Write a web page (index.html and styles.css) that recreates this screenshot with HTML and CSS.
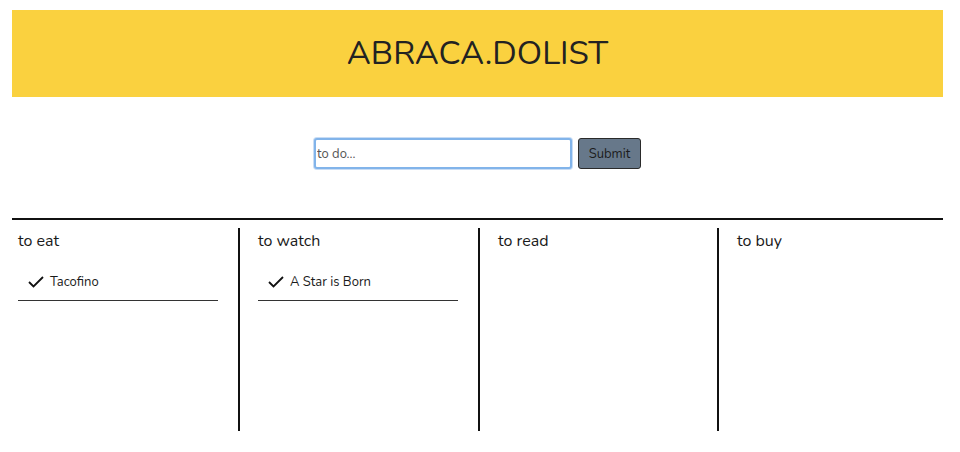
FILE: index.html
```html
<!DOCTYPE html>
<html lang="en">
<head>
<meta charset="utf-8">
<title>ABRACA.DOLIST</title>
<link rel="stylesheet" href="styles.css">
</head>
<body>
<div class="page">
  <header class="banner">
    <h1 class="title">ABRACA.DOLIST</h1>
  </header>
  <form class="entry">
    <input class="entry-input" type="text" placeholder="to do...">
    <button class="entry-submit" type="button">Submit</button>
  </form>
  <section class="board">
    <div class="column first">
      <h2 class="column-title">to eat</h2>
      <ul class="items">
        <li class="item">
          <svg class="check" width="16" height="12" viewBox="0 0 16 12"><polyline points="1,6 5.5,10.5 15,1" fill="none" stroke="#111" stroke-width="1.8"/></svg>
          <span>Tacofino</span>
        </li>
      </ul>
    </div>
    <div class="column">
      <h2 class="column-title">to watch</h2>
      <ul class="items">
        <li class="item">
          <svg class="check" width="16" height="12" viewBox="0 0 16 12"><polyline points="1,6 5.5,10.5 15,1" fill="none" stroke="#111" stroke-width="1.8"/></svg>
          <span>A Star is Born</span>
        </li>
      </ul>
    </div>
    <div class="column">
      <h2 class="column-title">to read</h2>
    </div>
    <div class="column">
      <h2 class="column-title">to buy</h2>
    </div>
  </section>
</div>
</body>
</html>
```
FILE: styles.css
```css
html, body {
  margin: 0;
  padding: 0;
  background: #ffffff;
}
body {
  font-family: "Nunito", "Lato", "Noto Sans", sans-serif;
  color: #1f1f1f;
}
.page {
  padding: 10px 17px 0 12px;
}
.banner {
  height: 87px;
  background: #fad13f;
  display: flex;
  align-items: center;
  justify-content: center;
}
.title {
  margin: 0;
  font-weight: 400;
  font-size: 33px;
  letter-spacing: 0;
  color: #222222;
  line-height: 1;
}
.entry {
  margin-top: 41px;
  display: flex;
  justify-content: center;
  gap: 6px;
  height: 31px;
}
.entry-input {
  box-sizing: border-box;
  width: 258px;
  height: 31px;
  border: 2px solid #82b4ea;
  border-radius: 3px;
  padding: 0 1px;
  font-family: inherit;
  font-size: 13px;
  outline: none;
  box-shadow: 0 0 0 1px #c9ddf5;
}
.entry-input::placeholder {
  color: #555555;
}
.entry-submit {
  box-sizing: border-box;
  width: 63px;
  height: 31px;
  background: #67788a;
  border: 1px solid #2a2a2a;
  border-radius: 3px;
  font-family: inherit;
  font-size: 13px;
  color: #1c1c1c;
  padding: 0;
}
.board {
  margin-top: 49px;
  border-top: 2px solid #111111;
  padding-top: 8px;
  display: grid;
  grid-template-columns: 226px 240px 239px 1fr;
}
.column {
  height: 203px;
  border-left: 2px solid #111111;
  padding-left: 18px;
  box-sizing: border-box;
}
.column.first {
  border-left: none;
  padding-left: 6px;
}
.column-title {
  margin: 3px 0 0 0;
  font-size: 16px;
  font-weight: 400;
  line-height: 20px;
  color: #1a1a1a;
}
.items {
  list-style: none;
  margin: 17px 0 0 0;
  padding: 0;
}
.item {
  width: 200px;
  box-sizing: border-box;
  height: 33px;
  padding: 0 0 5px 10px;
  border-bottom: 1px solid #333333;
  display: flex;
  align-items: center;
  gap: 6px;
  font-size: 13px;
  color: #1a1a1a;
}
.check {
  flex: none;
}
```
